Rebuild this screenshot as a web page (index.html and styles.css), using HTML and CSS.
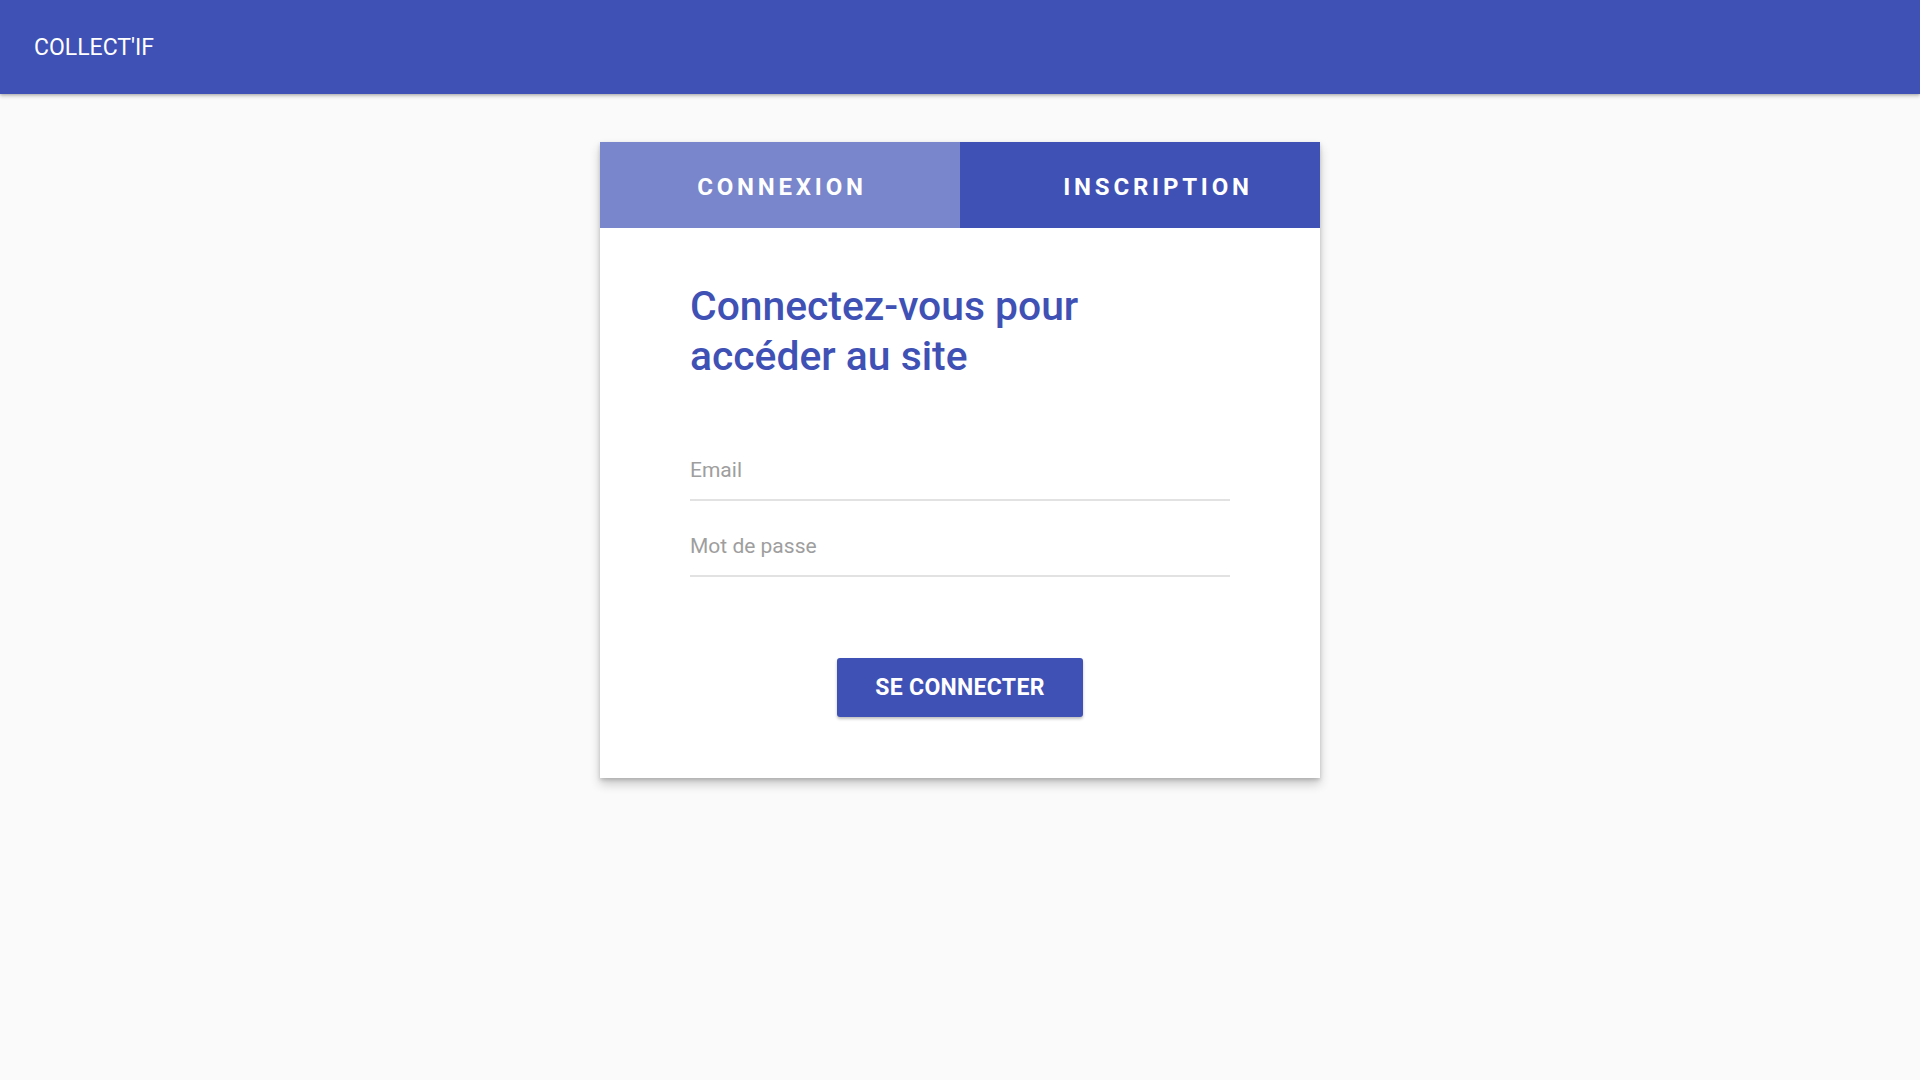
FILE: index.html
```html
<!DOCTYPE html>
<html lang="fr">
<head>
<meta charset="utf-8">
<title>Collect'IF</title>
<link rel="stylesheet" href="styles.css">
</head>
<body>
<header class="toolbar">
  <span class="toolbar-title">COLLECT'IF</span>
</header>
<main class="page">
  <section class="card">
    <nav class="tabs">
      <div class="tab tab-active"><span class="tab-label">CONNEXION</span></div>
      <div class="tab tab-other"><span class="tab-label tab-label-shift">INSCRIPTION</span></div>
    </nav>
    <div class="card-body">
      <h1 class="title">Connectez-vous pour accéder au site</h1>
      <form class="form">
        <input class="field" type="email" placeholder="Email">
        <input class="field" type="password" placeholder="Mot de passe">
        <div class="actions">
          <button class="btn" type="button">SE CONNECTER</button>
        </div>
      </form>
    </div>
  </section>
</main>
</body>
</html>
```

FILE: styles.css
```css
html, body {
  margin: 0;
  padding: 0;
}
body {
  background: #fafafa;
  font-family: Roboto, "Liberation Sans", Arial, sans-serif;
  color: #212121;
  min-height: 100vh;
}
.toolbar {
  height: 94px;
  background: #3f51b5;
  display: flex;
  align-items: center;
  padding-left: 34px;
  box-shadow: 0 2px 4px rgba(0,0,0,0.22), 0 1px 2px rgba(0,0,0,0.12);
  position: relative;
  z-index: 1;
}
.toolbar-title {
  color: #ffffff;
  font-size: 23px;
  font-weight: 400;
}
.page {
  padding-top: 48px;
  padding-bottom: 40px;
}
.card {
  width: 720px;
  margin: 0 auto;
  background: #ffffff;
  box-shadow: 0 6px 10px rgba(0,0,0,0.2), 0 2px 4px rgba(0,0,0,0.16);
}
.tabs {
  display: grid;
  grid-template-columns: 1fr 1fr;
  height: 86px;
}
.tab {
  display: flex;
  align-items: center;
  justify-content: center;
  color: #ffffff;
  font-size: 24px;
  font-weight: 700;
  letter-spacing: 3.8px;
  padding-top: 4px;
}
.tab-label {
  padding-left: 4px;
}
.tab-label-shift {
  padding-left: 36px;
}
.tab-active {
  background: #7986cb;
}
.tab-other {
  background: #3f51b5;
}
.card-body {
  padding: 53px 90px 61px;
}
.title {
  margin: 0 0 74px;
  max-width: 440px;
  font-size: 40.8px;
  line-height: 50px;
  font-weight: 500;
  color: #3f51b5;
}
.form {
  display: flex;
  flex-direction: column;
}
.field {
  display: block;
  width: 100%;
  box-sizing: content-box;
  height: 30px;
  padding: 0 0 14px;
  margin: 0;
  border: none;
  border-bottom: 2px solid #e2e2e2;
  outline: none;
  background: transparent;
  font-family: Roboto, "Liberation Sans", Arial, sans-serif;
  font-size: 21px;
  color: #212121;
}
.field + .field {
  margin-top: 30px;
}
.field::placeholder {
  color: #9e9e9e;
  opacity: 1;
}
.actions {
  margin-top: 81px;
  display: flex;
  justify-content: center;
}
.btn {
  height: 59px;
  padding: 0 38px;
  border: none;
  border-radius: 3px;
  background: #3f51b5;
  color: #ffffff;
  font-family: Roboto, "Liberation Sans", Arial, sans-serif;
  font-size: 23px;
  font-weight: 700;
  letter-spacing: 0.3px;
  box-shadow: 0 2px 3px rgba(0,0,0,0.25);
  cursor: pointer;
}
```
